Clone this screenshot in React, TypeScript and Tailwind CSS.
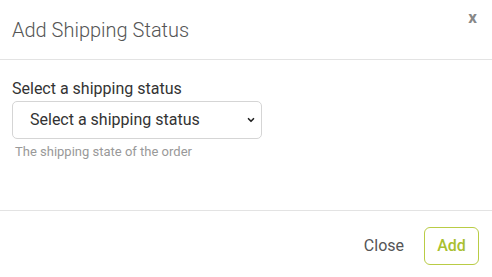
import { ChevronDown } from 'lucide-react';

export default function App() {
  return (
    <div className="w-[492px] h-[277px] bg-white overflow-hidden text-[#555]" style={{ fontFamily: 'Roboto, "Noto Sans", sans-serif' }}>
      {/* Header */}
      <div className="relative h-[60px] flex items-center px-3 border-b border-[#e3e3e3]">
        <h2 className="text-[20px] font-light text-[#555] leading-7">Add Shipping Status</h2>
        <button className="absolute right-[15px] top-[5px] text-[17px] font-bold text-[#888] leading-6">x</button>
      </div>

      {/* Body */}
      <div className="h-[150px] px-3 pt-[17px]">
        <label className="block text-[16px] leading-6 text-[#333]">Select a shipping status</label>
        <div className="relative w-[250px] h-[38px]">
          <select className="appearance-none w-full h-full rounded-[5px] border border-[#d5d5d5] bg-white pl-[17px] pr-8 text-[16px] text-[#333] outline-none">
            <option>Select a shipping status</option>
          </select>
          <ChevronDown className="absolute right-[6px] top-[14px] w-[10px] h-[10px] text-[#222] pointer-events-none" strokeWidth={4} />
        </div>
        <p className="mt-[5px] pl-[3px] text-[13px] leading-[16px] text-[#999]">The shipping state of the order</p>
      </div>

      {/* Footer */}
      <div className="border-t border-[#e3e3e3] flex justify-end items-center gap-5 pt-4 pr-[13px]">
        <button className="text-[16px] text-[#555] leading-6">Close</button>
        <button className="w-[55px] h-[38px] rounded-[6px] border border-[#b9cc45] text-[16px] font-medium text-[#a9c02f]">Add</button>
      </div>
    </div>
  );
}
